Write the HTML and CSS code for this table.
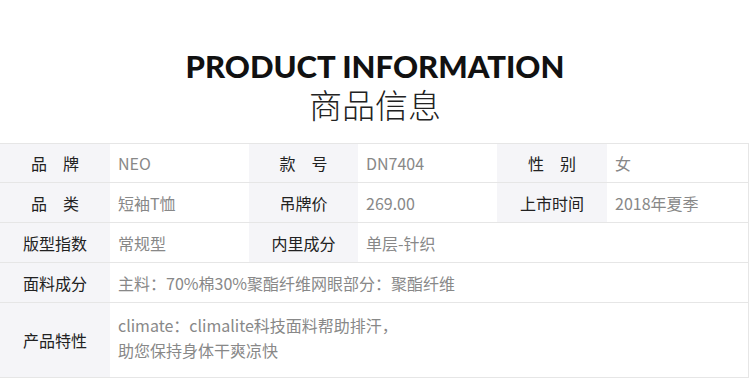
FILE: index.html
```html
<!DOCTYPE html>
<html lang="zh-CN">
<head>
<meta charset="utf-8">
<link rel="stylesheet" href="styles.css">
</head>
<body>
<header class="head">
  <h1 class="title-en">PRODUCT INFORMATION</h1>
  <h2 class="title-cn">商品信息</h2>
</header>
<section class="table">
  <div class="row">
    <div class="lab">品　牌</div><div class="val">NEO</div>
    <div class="lab">款　号</div><div class="val">DN7404</div>
    <div class="lab">性　别</div><div class="val">女</div>
  </div>
  <div class="row">
    <div class="lab">品　类</div><div class="val">短袖T恤</div>
    <div class="lab">吊牌价</div><div class="val">269.00</div>
    <div class="lab">上市时间</div><div class="val">2018年夏季</div>
  </div>
  <div class="row">
    <div class="lab">版型指数</div><div class="val">常规型</div>
    <div class="lab">内里成分</div><div class="val span3">单层-针织</div>
  </div>
  <div class="row">
    <div class="lab">面料成分</div><div class="val span5">主料：70%棉30%聚酯纤维网眼部分：聚酯纤维</div>
  </div>
  <div class="row tall">
    <div class="lab">产品特性</div><div class="val span5 multi">climate：climalite科技面料帮助排汗，<br>助您保持身体干爽凉快</div>
  </div>
</section>
</body>
</html>
```
FILE: styles.css
```css
html, body {
  margin: 0;
  padding: 0;
  background: #fff;
}
body {
  width: 750px;
  height: 378px;
  overflow: hidden;
  font-family: "Noto Sans CJK SC", "Noto Sans", sans-serif;
}
.head {
  text-align: center;
  padding-top: 50px;
  height: 143px;
  box-sizing: border-box;
}
.title-en {
  margin: 0;
  font-family: Lato, "Noto Sans", sans-serif;
  font-weight: 900;
  font-size: 31px;
  line-height: 32px;
  color: #111;
  letter-spacing: 0;
}
.title-cn {
  margin: 4px 0 0;
  font-weight: 300;
  font-size: 33px;
  line-height: 36px;
  color: #222;
}
.table {
  width: 748px;
  border-top: 1px solid #e6e6e6;
  border-right: 1px solid #e6e6e6;
}
.row {
  display: grid;
  grid-template-columns: 110px 139px 109px 139px 110px 141px;
  height: 40px;
  border-bottom: 1px solid #e6e6e6;
  box-sizing: border-box;
}
.row:first-child {
  height: 39px;
}
.row.tall {
  height: 75px;
}
.lab {
  background: #f5f5f8;
  color: #222;
  font-size: 16px;
  display: flex;
  align-items: center;
  justify-content: center;
}
.val {
  color: #888;
  font-size: 16px;
  display: flex;
  align-items: center;
  padding-left: 8px;
  white-space: nowrap;
}
.span3 { grid-column: span 3; }
.span5 { grid-column: span 5; }
.multi {
  display: block;
  align-self: center;
  line-height: 25px;
  padding-bottom: 5px;
  white-space: normal;
}
```
